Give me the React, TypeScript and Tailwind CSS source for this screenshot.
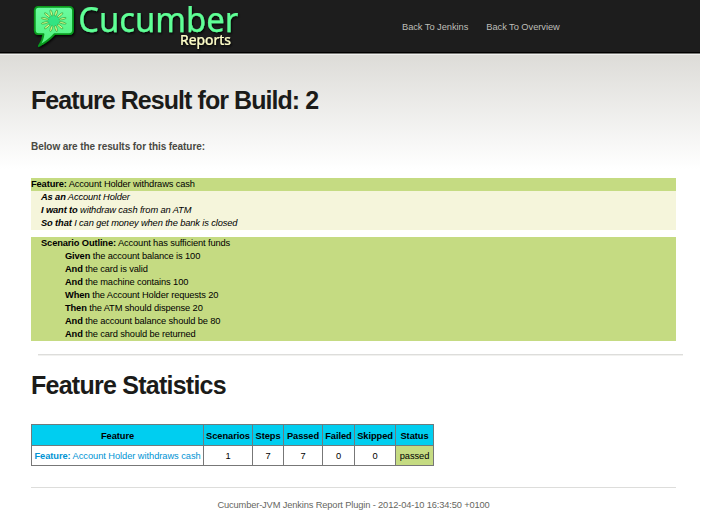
import React from "react";

const steps: [string, string][] = [
  ["Given", "the account balance is 100"],
  ["And", "the card is valid"],
  ["And", "the machine contains 100"],
  ["When", "the Account Holder requests 20"],
  ["Then", "the ATM should dispense 20"],
  ["And", "the account balance should be 80"],
  ["And", "the card should be returned"],
];

const story: [string, string][] = [
  ["As an", "Account Holder"],
  ["I want to", "withdraw cash from an ATM"],
  ["So that", "I can get money when the bank is closed"],
];

const seeds = [0, 30, 60, 90, 120, 150, 180, 210, 240, 270, 300, 330];

function Logo() {
  return (
    <svg className="block overflow-visible" width="220" height="52" viewBox="28 0 220 52">
      <defs>
        <linearGradient id="bubble" x1="0" y1="0" x2="0" y2="1">
          <stop offset="0" stopColor="#6cfca0" />
          <stop offset="1" stopColor="#4ff27c" />
        </linearGradient>
        <filter id="shade" x="-10%" y="-20%" width="125%" height="150%">
          <feDropShadow dx="1" dy="1.5" stdDeviation="1" floodColor="#000" floodOpacity="0.9" />
        </filter>
      </defs>
      <g filter="url(#shade)">
        <path
          d="M38.500 6.800H69Q73 6.800 73 10.800V30.300Q73 34.200 69 34.200H54.500Q48 41.500 38.800 46Q43 40 43.500 34.200H38.500Q34.800 34.200 34.800 30.300V10.800Q34.800 6.800 38.500 6.800Z"
          fill="url(#bubble)"
          stroke="#07991f"
          strokeWidth="1.8"
          strokeLinejoin="round"
        />
        <circle cx="53.700" cy="20.800" r="6" fill="#1fdc7c" opacity="0.7" />
        <g transform="translate(53.700 20.800) scale(1.120 0.980)">
          {seeds.map((a) => (
            <ellipse
              key={a}
              cx="0"
              cy="-8.200"
              rx="0.950"
              ry="3.300"
              fill="#dcfa86"
              stroke="#189a3a"
              strokeWidth="0.550"
              transform={`rotate(${a + 15})`}
            />
          ))}
        </g>
      </g>
      <g filter="url(#shade)">
        <text x="78.300" y="31.500" className="font-['Noto_Sans',sans-serif] text-[34px]" fill="#5fff96" stroke="#5fff96" strokeWidth="0.250" textLength="160" lengthAdjust="spacingAndGlyphs">
          Cucumber
        </text>
        <text x="180" y="44.700" className="font-['Noto_Sans',sans-serif] text-[13.5px]" fill="#ffffc8" stroke="#ffffc8" strokeWidth="0.200" textLength="51" lengthAdjust="spacingAndGlyphs">
          Reports
        </text>
      </g>
    </svg>
  );
}

function Statistics() {
  const head = "border border-[#6f7b7d] p-0 pt-[2px] text-center font-bold";
  const cell = "border border-[#777] p-0 pt-px text-center";
  return (
    <table className="mt-[24px] w-[403px] table-fixed border-collapse border border-[#555] text-[9.3px] leading-[13px] tracking-[-0.06px] text-black">
      <colgroup>
        <col className="w-[172px]" />
        <col className="w-[49px]" />
        <col className="w-[31px]" />
        <col className="w-[39px]" />
        <col className="w-[32px]" />
        <col className="w-[41px]" />
        <col className="w-[38px]" />
      </colgroup>
      <thead>
        <tr className="h-[21px] bg-[#00cef0]">
          {["Feature", "Scenarios", "Steps", "Passed", "Failed", "Skipped", "Status"].map((h) => (
            <th key={h} className={head}>{h}</th>
          ))}
        </tr>
      </thead>
      <tbody>
        <tr className="h-[20px]">
          <td className="whitespace-nowrap border border-[#777] p-0 pt-px text-center text-[#0094d4]">
            <b>Feature:</b> Account Holder withdraws cash
          </td>
          {[1, 7, 7, 0, 0].map((n, i) => (
            <td key={i} className={cell}>{n}</td>
          ))}
          <td className="border border-[#777] bg-[#c5db82] p-0 pt-px text-center">passed</td>
        </tr>
      </tbody>
    </table>
  );
}

export default function App() {
  return (
    <div className="h-[519px] w-[701px] overflow-hidden bg-white font-['Liberation_Sans',Arial,sans-serif]">
      <header className="flex h-[53px] w-[700px] border-b border-black bg-[#1d1d1d] pl-[28px]">
        <Logo />
        <nav className="flex gap-[18px] pl-[154px] pt-[21px] text-[9.3px] leading-[13px] tracking-[-0.05px] text-[#bdbdb8]">
          <a>Back To Jenkins</a>
          <a>Back To Overview</a>
        </nav>
      </header>
      <div className="h-[2px] w-[700px] border-t border-[#777774] bg-[#f0f0ee]" />
      <main className="h-[464px] w-[700px] bg-[linear-gradient(to_bottom,#dddcd8_0px,#ffffff_114px)] pl-[31px] pt-[30px]">
        <h1 className="h-[30px] whitespace-nowrap text-[25px] font-bold leading-[30px] tracking-[-0.94px] text-[#1b1b19]">
          Feature Result for Build: 2
        </h1>
        <h2 className="mt-[25px] h-[14px] text-[10px] font-bold leading-[14px] tracking-[-0.07px] text-[#494943]">
          Below are the results for this feature:
        </h2>
        <section className="mt-[24px] w-[645px] text-[9.3px] leading-[13px] tracking-[-0.12px] text-black">
          <div className="h-[13px] bg-[#c5db82]">
            <b>Feature:</b> Account Holder withdraws cash
          </div>
          <div className="bg-[#f5f5db] pl-[10px] italic">
            {story.map(([k, t]) => (
              <div key={k}><b>{k}</b> {t}</div>
            ))}
          </div>
          <div className="mt-[7px] bg-[#c5db82] pl-[10px]">
            <div><b>Scenario Outline:</b> Account has sufficient funds</div>
            {steps.map(([k, t]) => (
              <div key={t} className="pl-[24px]"><b>{k}</b> {t}</div>
            ))}
          </div>
        </section>
        <div className="ml-[7px] mt-[13px] h-[2px] w-[645px] border-t border-[#dddddb] bg-[#f1f1ef]" />
        <h1 className="mt-[14px] h-[30px] whitespace-nowrap text-[25px] font-bold leading-[30px] tracking-[-0.75px] text-[#1b1b19]">
          Feature Statistics
        </h1>
        <Statistics />
        <footer className="mt-[21px] w-[645px] border-t border-[#dddddb] pt-[11px] text-center text-[9.3px] leading-[13px] tracking-[-0.14px] text-[#666661]">
          Cucumber-JVM Jenkins Report Plugin - 2012-04-10 16:34:50 +0100
        </footer>
      </main>
    </div>
  );
}
